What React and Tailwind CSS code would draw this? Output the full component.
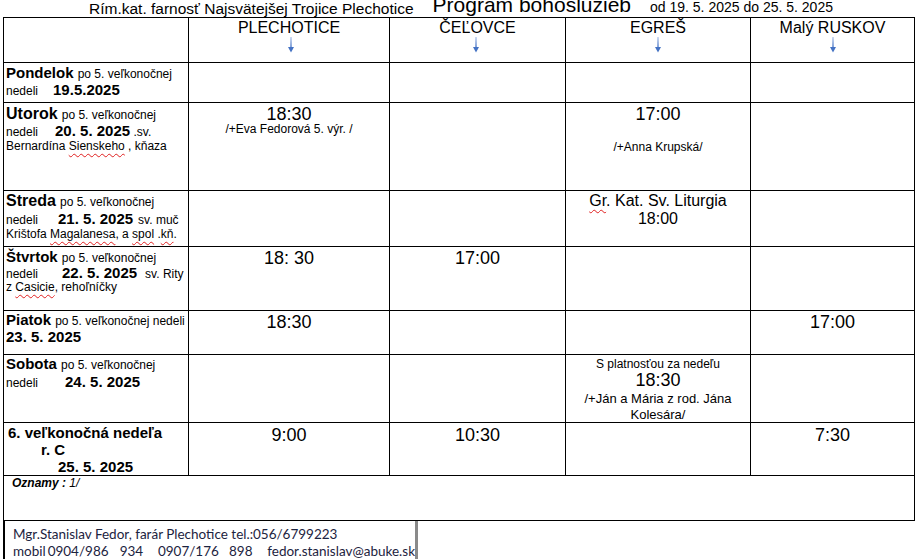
import React from "react";

const wavy = "underline decoration-wavy decoration-[#e02020] decoration-1 underline-offset-[3px]";

const Arrow = ({ id, shift = "" }) => (
  <div className={`flex justify-center ${shift}`}>
    <svg width="8" height="16" viewBox="0 0 8 16" className="block">
      <defs>
        <linearGradient id={id} x1="0" y1="0" x2="0" y2="1">
          <stop offset="0" stopColor="#b7caec" />
          <stop offset="1" stopColor="#4472c4" />
        </linearGradient>
      </defs>
      <rect x="3.3" y="0" width="1.4" height="11" fill={`url(#${id})`} />
      <path d="M1 10 L7 10 L4 15.5 Z" fill="#4472c4" />
    </svg>
  </div>
);

const Head = ({ label, id, shift }) => (
  <td className="border border-black align-top p-0">
    <div className="pt-[1px] text-center text-[16px] leading-[18px]">{label}</div>
    <Arrow id={id} shift={shift} />
  </td>
);

const Cell = ({ children, className = "" }) => (
  <td className={`border border-black align-top p-0 ${className}`}>{children}</td>
);

const Time = ({ t, pt = "pt-[3px]" }) => (
  <div className={`${pt} text-center text-[18px] leading-[17px]`}>{t}</div>
);

const Small = ({ children, className = "" }) => (
  <span className={`text-[12px] leading-[12px] ${className}`}>{children}</span>
);

export default function App() {
  return (
    <div className="w-[919px] h-[559px] overflow-hidden bg-white text-black font-['Liberation_Sans',Arial,sans-serif]">
      {/* title line */}
      <div className="flex h-[17px] items-start overflow-hidden whitespace-nowrap pl-[89px]">
        <span className="mt-[1px] text-[15.5px] leading-[15px]">
          <span className={wavy}>Rím.kat.</span> farnosť Najsvätejšej Trojice Plechotice
        </span>
        <span className="ml-[19px] -mt-[6px] text-[21px] leading-[21px]">Program bohoslužieb</span>
        <span className="ml-[19px] text-[14px] leading-[14px]">od 19. 5. 2025 do 25. 5. 2025</span>
      </div>

      <table className="ml-[3px] w-[911px] table-fixed border-collapse">
        <colgroup>
          <col className="w-[185px]" />
          <col className="w-[201px]" />
          <col className="w-[176px]" />
          <col className="w-[185px]" />
          <col className="w-[164px]" />
        </colgroup>
        <tbody>
          <tr className="h-[45px]">
            <Cell />
            <Head label="PLECHOTICE" id="a1" shift="pl-[4px]" />
            <Head label="ČEĽOVCE" id="a2" shift="pr-[4px]" />
            <Head label="EGREŠ" id="a3" />
            <Head label="Malý RUSKOV" id="a4" />
          </tr>

          {/* Pondelok */}
          <tr className="h-[40px]">
            <Cell className="pl-[2px]">
              <div className="pt-[1px] text-[15px] leading-[17px] whitespace-nowrap">
                <b>Pondelok</b> <Small>po 5. veľkonočnej</Small>
              </div>
              <div className="text-[15px] leading-[17px] whitespace-nowrap">
                <Small>nedeli</Small>
                <b className="ml-[15px]">19.5.2025</b>
              </div>
            </Cell>
            <Cell />
            <Cell />
            <Cell />
            <Cell />
          </tr>

          {/* Utorok */}
          <tr className="h-[88px]">
            <Cell className="pl-[2px]">
              <div className="pt-[2px] text-[15px] leading-[17px] whitespace-nowrap">
                <b className="text-[16px]">Utorok</b> <Small>po 5. veľkonočnej</Small>
              </div>
              <div className="text-[15px] leading-[17px] whitespace-nowrap">
                <Small>nedeli</Small>
                <b className="ml-[17px]">20. 5. 2025</b>
                <Small> .sv.</Small>
              </div>
              <div className="text-[12px] leading-[15px] whitespace-nowrap">
                Bernardína <span className={wavy}>Sienskeho</span> , kňaza
              </div>
            </Cell>
            <Cell>
              <Time t="18:30" pt="pt-[3px]" />
              <div className="text-center text-[12px] leading-[12px]">/+Eva Fedorová 5. výr. /</div>
            </Cell>
            <Cell />
            <Cell>
              <Time t="17:00" pt="pt-[3px]" />
              <div className="mt-[18px] text-center text-[12px] leading-[12px]">/+Anna Krupská/</div>
            </Cell>
            <Cell />
          </tr>

          {/* Streda */}
          <tr className="h-[56px]">
            <Cell className="pl-[2px]">
              <div className="pt-[1px] text-[15px] leading-[18px] whitespace-nowrap">
                <b className="text-[16px]">Streda</b> <Small>po 5. veľkonočnej</Small>
              </div>
              <div className="text-[15px] leading-[17px] whitespace-nowrap">
                <Small>nedeli</Small>
                <b className="ml-[20px]">21. 5. 2025</b>
                <Small className="ml-[5px]">sv. muč</Small>
              </div>
              <div className="text-[12px] leading-[15px] whitespace-nowrap">
                Krištofa <span className={wavy}>Magalanesa</span>, a <span className={wavy}>spol</span> .<span className={wavy}>kň</span>.
              </div>
            </Cell>
            <Cell />
            <Cell />
            <Cell>
              <div className="pt-[1px] text-center text-[16px] leading-[18px]">
                <span className={wavy}>Gr</span>. Kat. Sv. Liturgia
              </div>
              <div className="text-center text-[16px] leading-[18px]">18:00</div>
            </Cell>
            <Cell />
          </tr>

          {/* Štvrtok */}
          <tr className="h-[64px]">
            <Cell className="pl-[2px]">
              <div className="pt-[2px] text-[15px] leading-[16px] whitespace-nowrap">
                <b>Štvrtok</b> <Small>po 5. veľkonočnej</Small>
              </div>
              <div className="text-[15px] leading-[16px] whitespace-nowrap">
                <Small>nedeli</Small>
                <b className="ml-[24px]">22. 5. 2025</b>
                <Small className="ml-[8px]">sv. Rity</Small>
              </div>
              <div className="text-[12px] leading-[13px] whitespace-nowrap">
                z <span className={wavy}>Casicie</span>, rehoľníčky
              </div>
            </Cell>
            <Cell>
              <Time t="18: 30" />
            </Cell>
            <Cell>
              <Time t="17:00" />
            </Cell>
            <Cell />
            <Cell />
          </tr>

          {/* Piatok */}
          <tr className="h-[44px]">
            <Cell className="pl-[2px]">
              <div className="pt-[1px] text-[15px] leading-[16px] whitespace-nowrap">
                <b>Piatok</b> <Small>po 5. veľkonočnej nedeli</Small>
              </div>
              <div className="text-[15px] leading-[17px] whitespace-nowrap">
                <b>23. 5. 2025</b>
              </div>
            </Cell>
            <Cell>
              <Time t="18:30" />
            </Cell>
            <Cell />
            <Cell />
            <Cell>
              <Time t="17:00" />
            </Cell>
          </tr>

          {/* Sobota */}
          <tr className="h-[66px]">
            <Cell className="pl-[2px]">
              <div className="pt-0 text-[15px] leading-[18px] whitespace-nowrap">
                <b>Sobota</b> <Small>po 5. veľkonočnej</Small>
              </div>
              <div className="text-[15px] leading-[18px] whitespace-nowrap">
                <Small>nedeli</Small>
                <b className="ml-[27px]">24. 5. 2025</b>
              </div>
            </Cell>
            <Cell />
            <Cell />
            <Cell>
              <div className="pt-[2px] text-center text-[12px] leading-[14px]">S platnosťou za nedeľu</div>
              <div className="text-center text-[18px] leading-[19px]">18:30</div>
              <div className="text-center text-[13px] leading-[17px]">/+Ján a Mária z rod. Jána</div>
              <div className="text-center text-[13px] leading-[15px]">Kolesára/</div>
            </Cell>
            <Cell />
          </tr>

          {/* Nedeľa */}
          <tr className="h-[53px]">
            <Cell className="pl-[4px]">
              <div className="pt-[1px] text-[15px] leading-[17px] font-bold whitespace-nowrap">6. veľkonočná nedeľa</div>
              <div className="pl-[33px] text-[15px] leading-[17px] font-bold">r. C</div>
              <div className="pl-[50px] text-[15px] leading-[17px] font-bold">25. 5. 2025</div>
            </Cell>
            <Cell>
              <Time t="9:00" pt="pt-[4px]" />
            </Cell>
            <Cell>
              <Time t="10:30" pt="pt-[4px]" />
            </Cell>
            <Cell />
            <Cell>
              <Time t="7:30" pt="pt-[4px]" />
            </Cell>
          </tr>

          {/* Oznamy */}
          <tr className="h-[45px]">
            <td colSpan={5} className="border border-black align-top p-0 pl-[8px]">
              <div className="text-[12px] leading-[14px] italic">
                <b>Oznamy :</b> 1/
              </div>
            </td>
          </tr>
        </tbody>
      </table>

      {/* contact box */}
      <div className="ml-[3px] h-[60px] w-[415px] border-l-2 border-l-black border-r-[3px] border-r-[#8a8a8a] pl-[8px] pt-[5px] font-['Lato',sans-serif] text-[13.5px] leading-[17px] text-[#1c2340] whitespace-nowrap">
        <div>Mgr.Stanislav Fedor, farár Plechotice tel.:056/6799223</div>
        <div className="flex">
          <span className="w-[38px]">mobil</span>
          <span className="w-[79px]">0904/986</span>
          <span className="w-[42px]">934</span>
          <span className="w-[78px]">0907/176</span>
          <span className="w-[42px]">898</span>
          <span>fedor.stanislav@abuke.sk</span>
        </div>
      </div>
    </div>
  );
}
